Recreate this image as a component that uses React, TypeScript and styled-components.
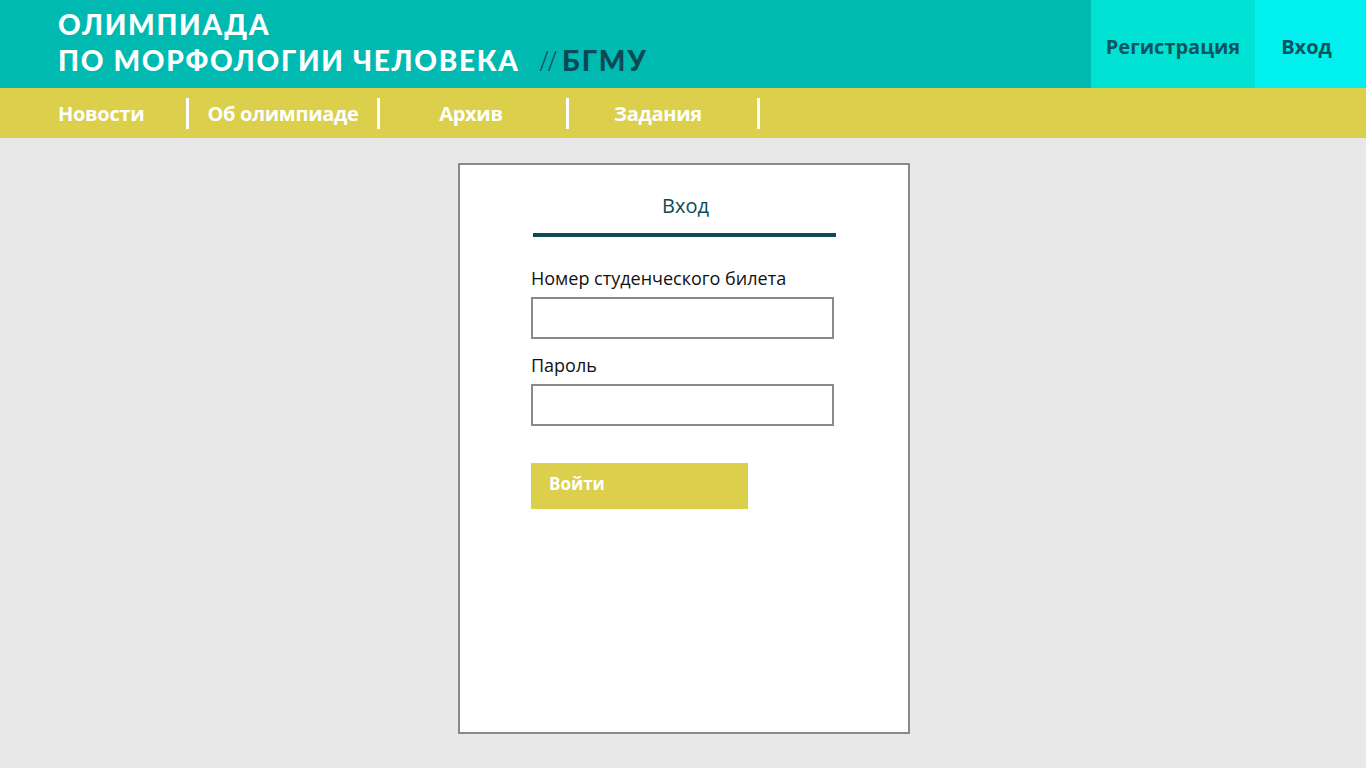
import React from "react";
import styled, { createGlobalStyle } from "styled-components";

const GlobalStyle = createGlobalStyle`
  html, body { margin: 0; padding: 0; background: #e8e8e8; }
  body { font-family: "Open Sans", "Liberation Sans", sans-serif; }
  * { box-sizing: border-box; }
`;

const Page = styled.div`
  min-height: 768px;
  background: #e8e8e8;
  display: flex;
  flex-direction: column;
`;

const Header = styled.header`
  height: 88px;
  background: #00bab2;
  display: flex;
  align-items: stretch;
`;

const Brand = styled.div`
  flex: 1;
  padding: 6px 0 0 58px;
  font-family: "Lato", "Liberation Sans", sans-serif;
  font-weight: 900;
  font-size: 28px;
  line-height: 36px;
  color: #ffffff;
  letter-spacing: 1.7px;
`;

const BrandLine = styled.div`
  white-space: nowrap;
  display: flex;
  align-items: baseline;
`;

const Slashes = styled.span`
  font-family: "Open Sans", sans-serif;
  font-weight: 300;
  color: #0b4a55;
  margin-left: 20px;
  margin-right: 6px;
  font-size: 27px;
  letter-spacing: -1px;
`;

const Uni = styled.span`
  color: #0b4a55;
  letter-spacing: 2px;
`;

const HeadLink = styled.a<{ $bg: string; $w: number; $shift?: number }>`
  width: ${(p) => p.$w}px;
  background: ${(p) => p.$bg};
  color: #0b5560;
  font-weight: 700;
  font-size: 20px;
  display: flex;
  align-items: center;
  justify-content: center;
  text-decoration: none;
  padding-top: 4px;
  padding-right: ${(p) => p.$shift ?? 0}px;
`;

const Nav = styled.nav`
  height: 50px;
  background: #dbcf4b;
  display: flex;
  align-items: center;
  padding-left: 58px;
`;

const NavItem = styled.a<{ $w: number; $left?: boolean; $shift?: number }>`
  width: ${(p) => p.$w}px;
  color: #ffffff;
  font-weight: 700;
  font-size: 20px;
  text-decoration: none;
  text-align: ${(p) => (p.$left ? "left" : "center")};
  padding-right: ${(p) => p.$shift ?? 0}px;
  white-space: nowrap;
  letter-spacing: -0.3px;
`;

const NavSep = styled.span`
  width: 3px;
  height: 31px;
  background: #ffffff;
  flex: none;
`;

const Main = styled.main`
  display: flex;
  justify-content: center;
  padding: 25px 0 34px;
`;

const Card = styled.section`
  width: 452px;
  height: 571px;
  background: #ffffff;
  border: 2px solid #8a8a8a;
  padding: 26px 0 0 71px;
  margin-left: 2px;
`;

const Column = styled.div`
  width: 305px;
  display: flex;
  flex-direction: column;
`;

const Title = styled.h1`
  margin: 0;
  font-size: 20px;
  font-weight: 400;
  color: #0b4a55;
  text-align: center;
  line-height: 30px;
  padding-left: 4px;
`;

const TitleBar = styled.div`
  height: 4px;
  background: #0e4a57;
  margin: 12px 0 0 2px;
`;

const Label = styled.label<{ $top: number }>`
  display: block;
  margin-top: ${(p) => p.$top}px;
  font-size: 18px;
  color: #111111;
  line-height: 24px;
`;

const Input = styled.input`
  width: 303px;
  height: 42px;
  border: 2px solid #8a8a8a;
  margin-top: 7px;
  outline: none;
  font: inherit;
`;

const Button = styled.button`
  width: 217px;
  height: 46px;
  margin-top: 37px;
  border: none;
  background: #dbcf4b;
  color: #ffffff;
  font-family: "Open Sans", sans-serif;
  font-weight: 700;
  font-size: 17px;
  text-align: left;
  padding: 0 0 5px 18px;
`;

export default function App() {
  return (
    <Page>
      <GlobalStyle />
      <Header>
        <Brand>
          <BrandLine>ОЛИМПИАДА</BrandLine>
          <BrandLine>
            ПО МОРФОЛОГИИ ЧЕЛОВЕКА
            <Slashes>//</Slashes>
            <Uni>БГМУ</Uni>
          </BrandLine>
        </Brand>
        <HeadLink $bg="#00e2d4" $w={164}>Регистрация</HeadLink>
        <HeadLink $bg="#00f0f0" $w={111} $shift={8}>Вход</HeadLink>
      </Header>
      <Nav>
        <NavItem $w={128} $left>Новости</NavItem>
        <NavSep />
        <NavItem $w={188}>Об олимпиаде</NavItem>
        <NavSep />
        <NavItem $w={186} $shift={4}>Архив</NavItem>
        <NavSep />
        <NavItem $w={188} $shift={10}>Задания</NavItem>
        <NavSep />
      </Nav>
      <Main>
        <Card>
          <Column>
            <Title>Вход</Title>
            <TitleBar />
            <Label $top={29}>Номер студенческого билета</Label>
            <Input type="text" />
            <Label $top={14}>Пароль</Label>
            <Input type="password" />
            <Button>Войти</Button>
          </Column>
        </Card>
      </Main>
    </Page>
  );
}
